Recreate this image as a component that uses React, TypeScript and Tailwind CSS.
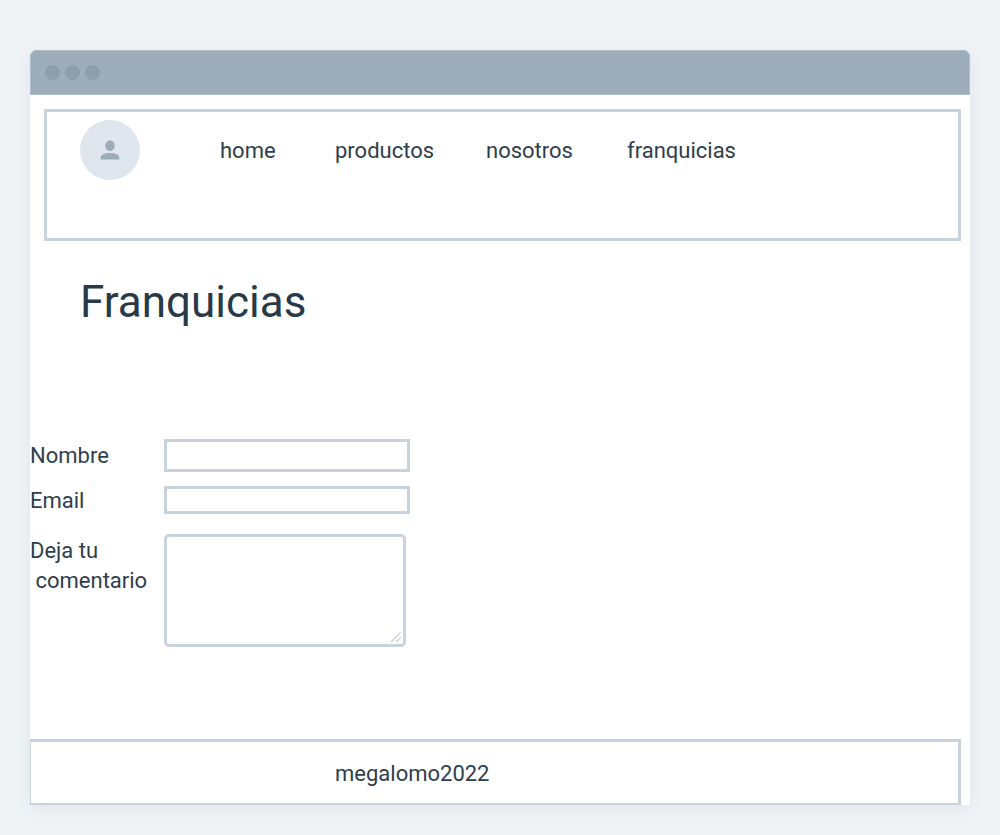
import React from "react";

const links = [
  { label: "home", width: "w-[115px]" },
  { label: "productos", width: "w-[151px]" },
  { label: "nosotros", width: "w-[141px]" },
  { label: "franquicias", width: "w-auto" },
];

function TitleBar() {
  return (
    <div className="flex h-[45px] items-center gap-[5px] rounded-t-md border border-[#afbecb] bg-[#9eadba] pl-[14px]">
      <span className="size-[15px] rounded-full bg-[#8e9eac]" />
      <span className="size-[15px] rounded-full bg-[#8e9eac]" />
      <span className="size-[15px] rounded-full bg-[#8e9eac]" />
    </div>
  );
}

function Avatar() {
  return (
    <a
      href="#perfil"
      aria-label="Perfil"
      className="flex size-[60px] shrink-0 items-center justify-center rounded-full bg-[#dfe6ee]"
    >
      <svg width="20" height="20" viewBox="0 0 20 20" fill="#9eadba" aria-hidden="true">
        <ellipse cx="10" cy="5.7" rx="4.8" ry="5.4" />
        <path d="M0.6 19.6V17.6C0.6 14.6 4.6 12.9 10 12.9S19.4 14.6 19.4 17.6V19.6Z" />
      </svg>
    </a>
  );
}

function Header() {
  return (
    <header className="mt-[14px] mr-[9px] ml-[14px] h-[132px] border-3 border-[#c8d3dd] pt-2 pl-[33px]">
      <div className="flex items-center">
        <Avatar />
        <nav className="ml-20 flex pt-[2px]">
          {links.map((link) => (
            <a key={link.label} href={`#${link.label}`} className={link.width}>
              {link.label}
            </a>
          ))}
        </nav>
      </div>
    </header>
  );
}

function ContactForm() {
  return (
    <form className="mt-[107px] grid grid-cols-[134px_1fr]">
      <label htmlFor="nombre" className="pt-[2px]">
        Nombre
      </label>
      <input
        id="nombre"
        type="text"
        className="h-[33px] w-[246px] border-3 border-[#c8d3dd] px-2 outline-none"
      />
      <label htmlFor="email" className="mt-[14px]">
        Email
      </label>
      <input
        id="email"
        type="email"
        className="mt-[14px] h-7 w-[246px] border-3 border-[#c8d3dd] px-2 outline-none"
      />
      <label htmlFor="comentario" className="mt-5 whitespace-pre">
        {"Deja tu\n comentario"}
      </label>
      <div className="relative mt-[18px] h-[113px] w-[242px]">
        <textarea
          id="comentario"
          className="block size-full resize-none rounded-[5px] border-3 border-[#c8d3dd] px-2 outline-none"
        />
        <svg
          className="pointer-events-none absolute right-1 bottom-1"
          width="12"
          height="12"
          viewBox="0 0 12 12"
          stroke="#c8d3dd"
          strokeWidth="1.4"
          aria-hidden="true"
        >
          <path d="M1 11L11 1M6 11L11 6" />
        </svg>
      </div>
    </form>
  );
}

export default function App() {
  return (
    <div className="flex min-h-screen flex-col bg-[#eff3f6] px-[30px] pt-[50px] pb-[30px] font-['Roboto','Liberation_Sans',sans-serif] text-[22px] leading-[30px] text-[#2f3e4c]">
      <div className="flex grow flex-col rounded-t-md bg-white shadow-[0_4px_16px_rgba(60,80,100,0.08)]">
        <TitleBar />
        <Header />
        <main>
          <h1 className="mt-[31px] ml-[50px] text-[44px] leading-[60px] text-[#283947]">Franquicias</h1>
          <ContactForm />
        </main>
        <footer className="mt-auto mr-[9px] h-[66px] border-3 border-b-2 border-l border-[#c8d3dd] pt-[17px] pl-[304px]">
          megalomo2022
        </footer>
      </div>
    </div>
  );
}
